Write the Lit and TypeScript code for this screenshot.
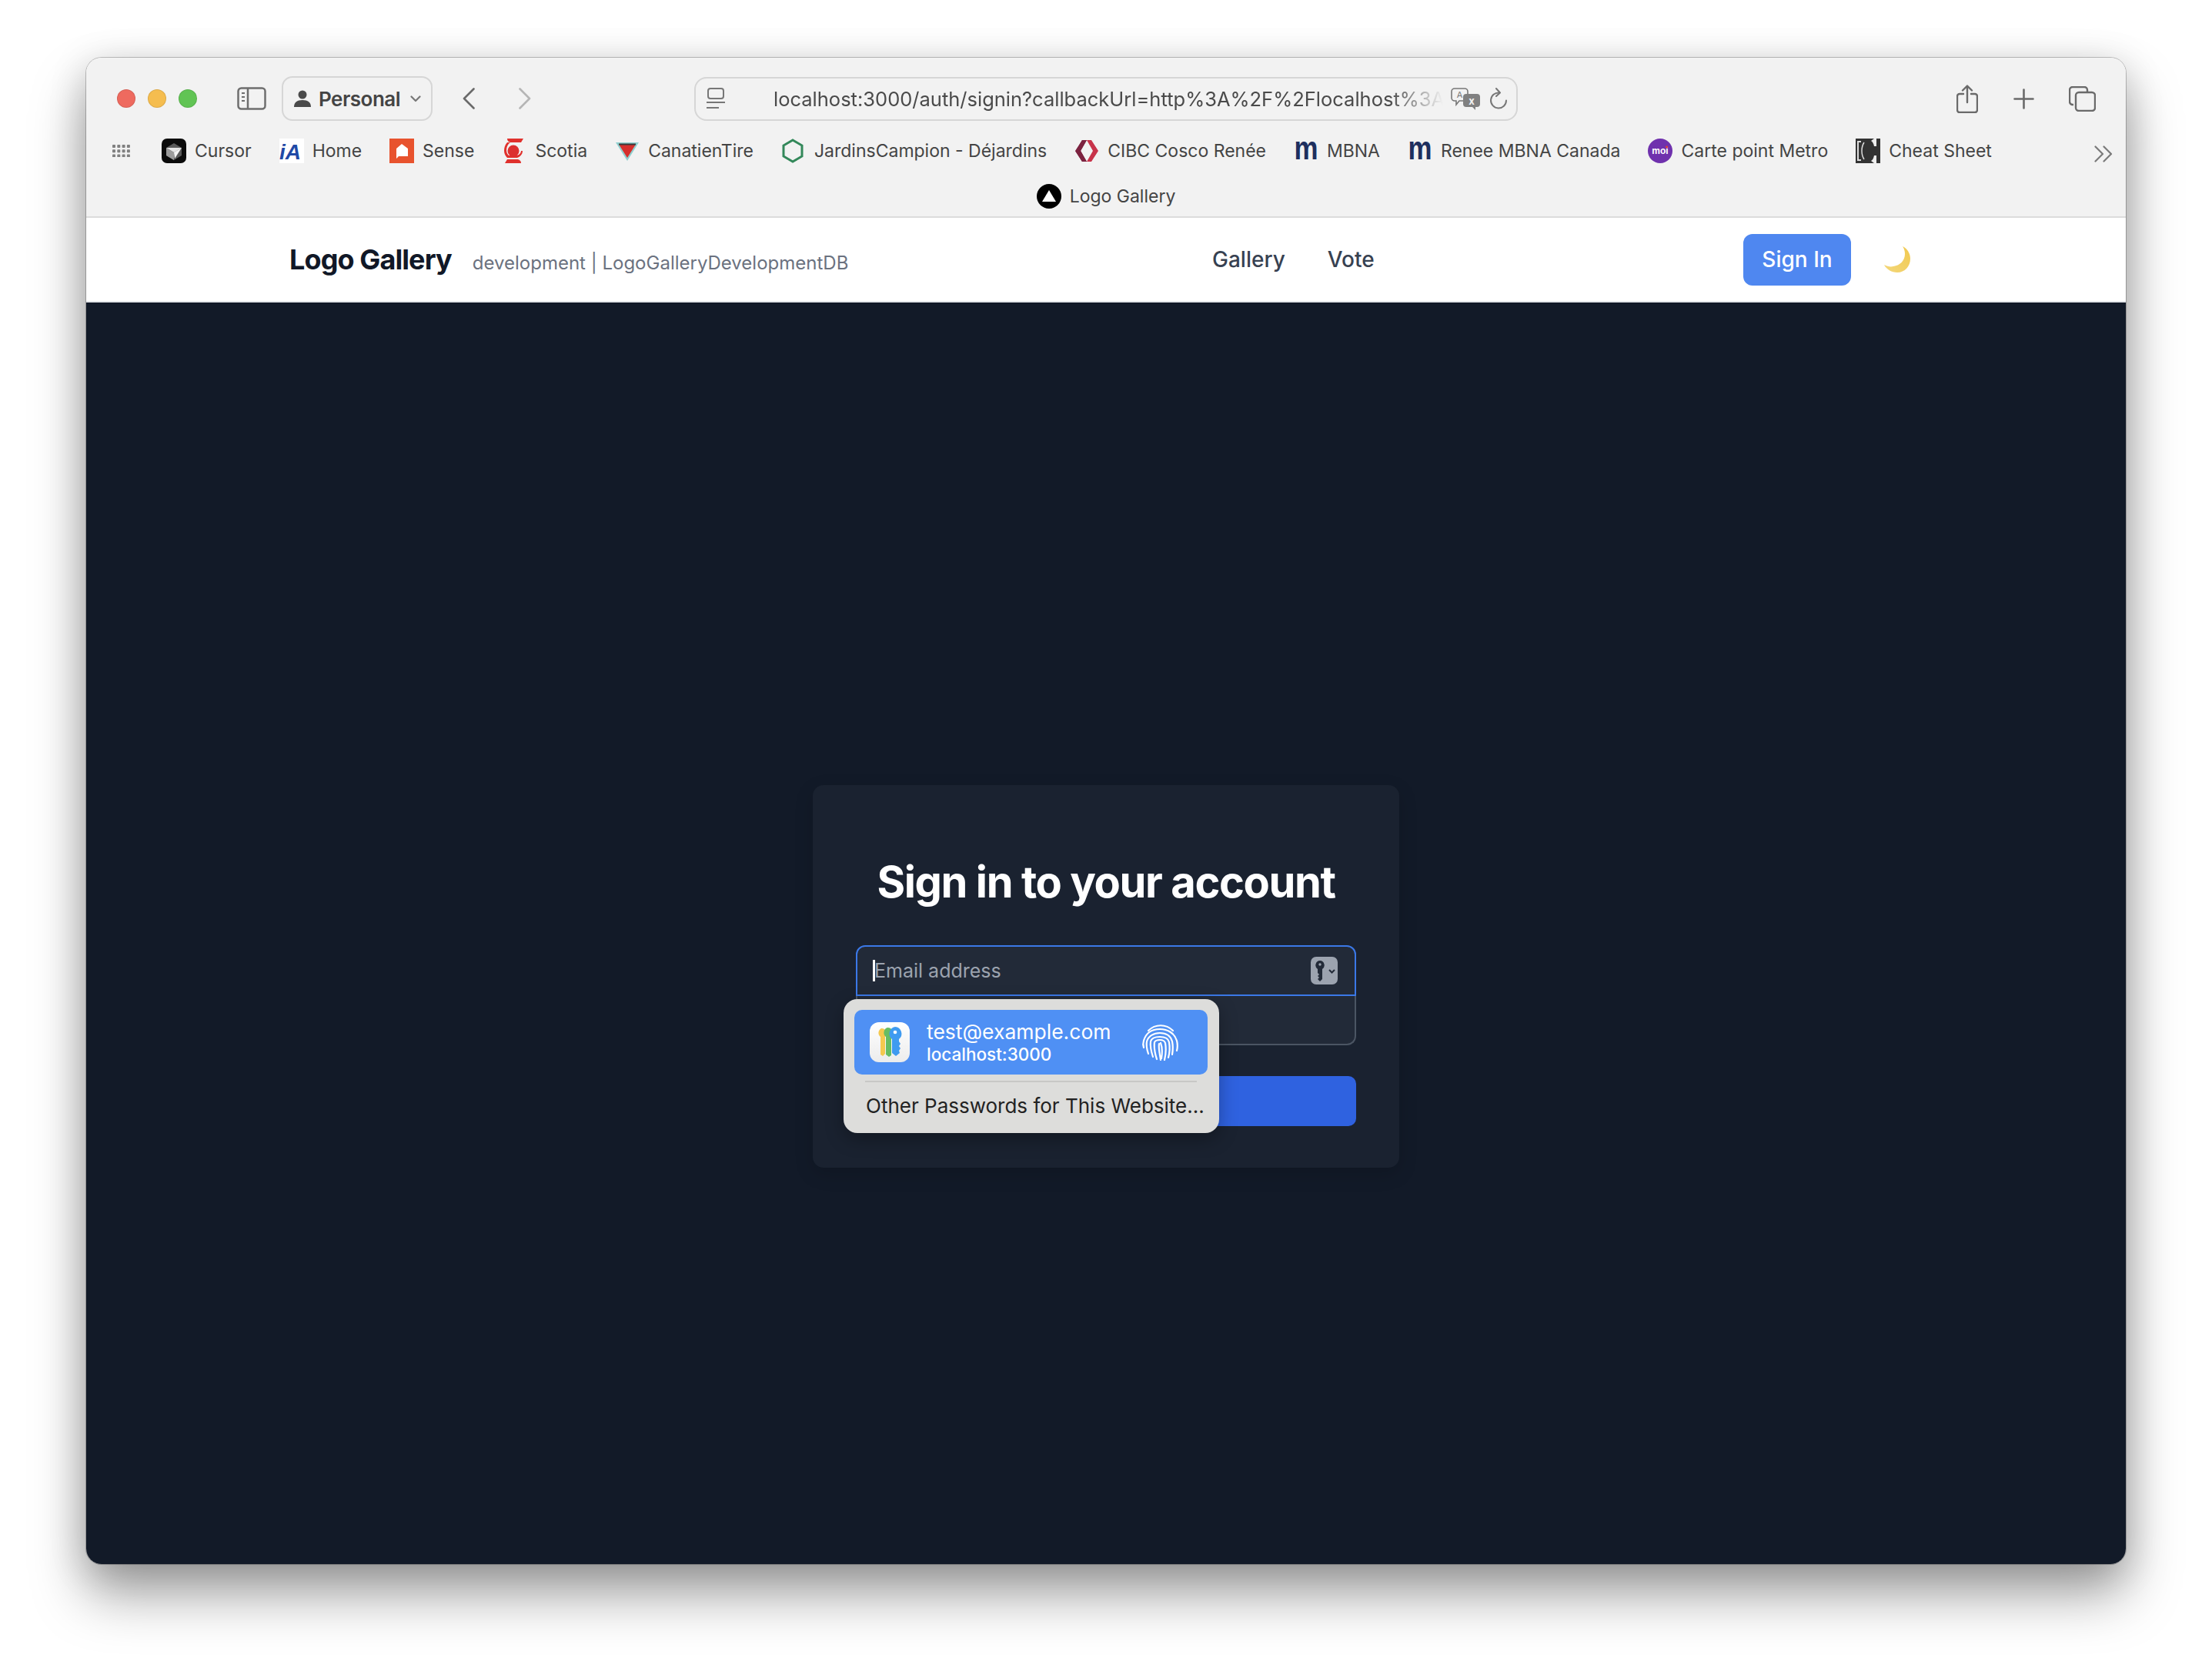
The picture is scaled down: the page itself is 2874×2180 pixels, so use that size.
import { LitElement, html, css, svg } from "lit";
import { customElement } from "lit/decorators.js";

const fav: Record<string, unknown> = {
  cursor: svg`<rect width="32" height="32" rx="7" fill="#0b0b0b"/><path d="M16 6l10 6v10l-10 6-10-6V12z" fill="#5a5a5a"/><path d="M6 12l20 0-10 6z" fill="#e6e6e6"/><path d="M6 12l10 6v10l-10-6z" fill="#9c9c9c"/><path d="M26 12l-10 6 1 8z" fill="#f4f4f4"/>`,
  ia: svg`<rect width="32" height="32" fill="#fff"/><text x="0" y="27" font-family="Liberation Sans" font-weight="700" font-style="italic" font-size="28" fill="#1f49a6">iA</text>`,
  sense: svg`<rect width="32" height="32" fill="#e8532e"/><path d="M16 7l8 6v10H12l-3 3v-13z" fill="#fff"/>`,
  scotia: svg`<path d="M7 0h21l-3 5H13C9 5 7 3 7 0zM4 32l3-5h12c4 0 6 2 6 5z" fill="#e0312d"/><path d="M7 5c-3 3-4 7-4 11 0 4 2 7 4 9h13c3-1 7-4 7-9h-2c0 3-3 6-7 6H9c-2-2-3-4-3-7 0-4 2-8 5-10z" fill="#e0312d"/><circle cx="15" cy="16" r="7.5" fill="#dc3030"/>`,
  tire: svg`<path d="M1 5h30L16 29z" fill="#8fd0cf"/><path d="M5 7.5h22L16 25z" fill="#d62f2c"/><path d="M5 7.5h22" stroke="#3a3a3a" stroke-width="2"/>`,
  hex: svg`<path d="M15 2l12 7v14l-12 7-12-7V9z" fill="none" stroke="#33885a" stroke-width="3"/>`,
  cibc: svg`<path d="M10 2h6l-8 14 8 14h-6L1 16z" fill="#7c2340"/><path d="M16 2h6l9 14-9 14h-6l8-14z" fill="#c8334a"/><path d="M10 2h6l-8 14H2zM8 16l8 14h-6L1 16z" fill="#7c2340"/>`,
  m: svg`<text x="16" y="27" text-anchor="middle" font-family="Liberation Sans" font-weight="700" font-size="42" textLength="31" lengthAdjust="spacingAndGlyphs" fill="#1e2f5e">m</text>`,
  moi: svg`<circle cx="16" cy="16" r="16" fill="#6f31ad"/><text x="16" y="20" text-anchor="middle" font-family="Liberation Sans" font-weight="700" font-size="12" fill="#fff">moi</text><circle cx="24.5" cy="11" r="1.4" fill="#e8402c"/>`,
  cheat: svg`<rect width="32" height="32" fill="#333"/><path d="M2 3h5v2H4v22h3v2H2z" fill="#ddd"/><path d="M24 0h3v10h-3c-1-4-2-6-4-7zM24 32h3V22h-3c-1 4-2 6-4 7z" fill="#eee"/><path d="M11 5c-2 3-3 7-3 11s1 8 3 11" stroke="#ddd" stroke-width="1.5" fill="none"/>`,
  triangle: svg`<circle cx="16" cy="16" r="16" fill="#000"/><path d="M16 8l9 15H7z" fill="#fff"/>`,
};

const row2 = [
  ["cursor", "Cursor"], ["ia", "Home"], ["sense", "Sense"], ["scotia", "Scotia"], ["tire", "CanatienTire"],
  ["hex", "JardinsCampion - Déjardins"], ["cibc", "CIBC Cosco Renée"], ["m", "MBNA"], ["m", "Renee MBNA Canada"],
  ["moi", "Carte point Metro"], ["cheat", "Cheat Sheet"],
];

@customElement("app-root")
export class AppRoot extends LitElement {
  static styles = css`
    :host { display: block; background: #fff; font-family: Inter, "Liberation Sans", sans-serif; padding: 75px 112px 148px; }
    * { box-sizing: border-box; }
    svg { display: block; flex: none; }
    .win { width: 2650px; height: 1957px; border-radius: 20px; overflow: hidden; display: flex; flex-direction: column; }
    .shadow { border-radius: 20px; box-shadow: 0 0 0 1px rgba(0,0,0,.22), 0 40px 70px rgba(0,0,0,.36), 0 8px 50px rgba(0,0,0,.16); }
    .chrome { height: 208px; background: #f2f2f2; border-bottom: 2px solid #dcdcdc; flex: none; }
    .row1 { display: flex; align-items: center; height: 58px; margin-top: 24px; padding-left: 40px; }
    .dot { width: 24px; height: 24px; border-radius: 50%; margin-right: 16px; border: 1px solid rgba(0,0,0,.1); }
    .red { background: #ee6a5f; } .yel { background: #f5bd4f; } .grn { background: #61c454; margin-right: 0; }
    .side { margin-left: 52px; }
    .profile { margin-left: 20px; width: 196px; height: 58px; border: 2px solid #d6d6d6; border-radius: 14px; display: flex; align-items: center; padding-left: 14px; color: #444; font-size: 26px; font-weight: 600; letter-spacing: -.5px; }
    .profile span { margin-left: 10px; }
    .chev { margin-left: 13px; }
    .back { margin-left: 39px; } .fwd { margin-left: 57px; }
    .url { margin-left: 212px; width: 1070px; height: 57px; border: 2px solid #d6d6d6; border-radius: 16px; display: flex; align-items: center; padding-left: 14px; }
    .urltxt { margin-left: 63px; width: 870px; white-space: nowrap; overflow: hidden; font-size: 25.5px; color: #4a4a4a; flex: none; -webkit-mask-image: linear-gradient(90deg, #000 92%, transparent 100%); mask-image: linear-gradient(90deg, #000 92%, transparent 100%); }
    .tr { margin-left: 10px; } .rl { margin-left: 12px; }
    .share { margin-left: 570px; } .plus { margin-left: 46px; } .tabs { margin-left: 45px; }
    .row2 { display: flex; align-items: center; height: 32px; margin-top: 23px; padding-left: 34px; }
    .apps { margin-right: 41px; }
    .bm { display: flex; align-items: center; gap: 11px; margin-right: 36px; font-size: 23px; color: #444; white-space: nowrap; }
    .more { position: absolute; left: 2721px; top: 189px; }
    .row3 { display: flex; justify-content: center; margin-top: 27px; }
    .row3 .bm { margin-right: 0; }
    .nav { height: 110px; flex: none; background: #fff; border-bottom: 2px solid #e5e7eb; display: flex; align-items: center; padding-left: 264px; }
    .brand { width: 1199px; display: flex; align-items: baseline; flex: none; }
    .logo { font-size: 36px; font-weight: 700; color: #111827; letter-spacing: -.9px; }
    .env { margin-left: 27px; font-size: 24px; color: #6b7280; }
    .links { width: 690px; flex: none; display: flex; gap: 55px; font-size: 28px; font-weight: 500; color: #374151; }
    .signin { width: 140px; height: 67px; background: #4f87f0; color: #fff; border: 0; border-radius: 12px; font: 500 28px Inter, sans-serif; display: flex; align-items: center; justify-content: center; }
    .moon { margin-left: 43px; }
    main { flex: 1; background: #121a28; padding-top: 627px; }
    .card { width: 762px; margin: 0 auto; background: #1a2230; border-radius: 14px; padding: 90px 56px 54px; box-shadow: 0 8px 24px rgba(0,0,0,.15); }
    h1 { margin: 0 0 46px; height: 72px; line-height: 72px; text-align: center; font-size: 56px; font-weight: 700; letter-spacing: -1.4px; color: #fff; }
    .form { position: relative; }
    .in { display: flex; align-items: center; background: #222a38; }
    .in1 { height: 66px; border: 2px solid #3b78e7; border-radius: 12px 12px 0 0; padding: 0 22px 0 20px; position: relative; }
    .in2 { height: 64px; border: 2px solid #4b5563; border-top: 0; border-radius: 0 0 12px 12px; }
    .caret { width: 3px; height: 28px; background: #fff; flex: none; }
    .ph { font-size: 25px; color: #9ca3af; margin-left: -1px; }
    .key { margin-left: auto; }
    .submit { margin-top: 40px; height: 65px; background: #2f62e0; border-radius: 10px; }
    .pop { position: absolute; left: -16px; top: 70px; width: 488px; height: 174px; background: #dddddb; border-radius: 18px; padding: 14px 15px 0 14px; box-shadow: 0 8px 24px rgba(0,0,0,.3); }
    .hl { height: 84px; background: #4f90f4; border-radius: 10px; display: flex; align-items: center; padding-left: 20px; color: #fff; }
    .hltxt { margin-left: 22px; }
    .em { font-size: 26.5px; line-height: 32px; }
    .host { font-size: 22.5px; line-height: 28px; font-weight: 500; }
    .fp { margin-left: auto; margin-right: 37px; }
    .sep { height: 2px; background: #c8c8c6; margin: 8px 14px 0; }
    .oth { margin: 15px 0 0 15px; font-size: 26px; line-height: 32px; color: #222; white-space: nowrap; }
  `;

  render() {
    return html`
      <div class="shadow"><div class="win">
        <div class="chrome">
          <div class="row1">
            <i class="dot red"></i><i class="dot yel"></i><i class="dot grn"></i>
            <svg class="side" width="38" height="30" viewBox="0 0 38 30" fill="none" stroke="#6e6e6e" stroke-width="2.5"><rect x="1.5" y="1.5" width="35" height="27" rx="4"/><path d="M14 2v26"/><path d="M6 8h4M6 13h4M6 18h4" stroke-width="2"/></svg>
            <div class="profile">
              <svg width="22" height="22" viewBox="0 0 22 22" fill="#4a4a4a"><circle cx="11" cy="6" r="5.5"/><path d="M0 22c0-6 4-9 11-9s11 3 11 9z"/></svg>
              <span>Personal</span>
              <svg class="chev" width="14" height="9" viewBox="0 0 14 9" fill="none" stroke="#777" stroke-width="2.2" stroke-linecap="round" stroke-linejoin="round"><path d="M1.5 1.5L7 7l5.5-5.5"/></svg>
            </div>
            <svg class="back" width="16" height="28" viewBox="0 0 16 28" fill="none" stroke="#6a6a6a" stroke-width="2.6" stroke-linecap="round" stroke-linejoin="round"><path d="M14.5 1.5L2 14l12.5 12.5"/></svg>
            <svg class="fwd" width="16" height="28" viewBox="0 0 16 28" fill="none" stroke="#b5b5b5" stroke-width="2.6" stroke-linecap="round" stroke-linejoin="round"><path d="M1.5 1.5L14 14 1.5 26.5"/></svg>
            <div class="url">
              <svg width="24" height="28" viewBox="0 0 24 28" fill="none" stroke="#777" stroke-width="2"><rect x="2" y="1" width="20" height="13" rx="3"/><path d="M0 19h24M0 26h16"/></svg>
              <div class="urltxt">localhost:3000/auth/signin?callbackUrl=http%3A%2F%2Flocalhost%3A3000</div>
              <svg class="tr" width="38" height="29" viewBox="0 0 38 29"><path d="M5 1h13a4 4 0 0 1 4 4v8a4 4 0 0 1-4 4h-7l-4 5v-5H5a4 4 0 0 1-4-4V5a4 4 0 0 1 4-4z" fill="none" stroke="#777" stroke-width="1.6"/><text x="11.5" y="13" text-anchor="middle" font-family="Inter" font-size="11" fill="#777">A</text><path d="M20 8h14a4 4 0 0 1 4 4v9a4 4 0 0 1-4 4h-2v4l-4-4h-8a4 4 0 0 1-4-4v-9a4 4 0 0 1 4-4z" fill="#808080"/><text x="27" y="22" text-anchor="middle" font-family="Inter" font-weight="700" font-size="13" fill="#f2f2f2">x</text></svg>
              <svg class="rl" width="24" height="28" viewBox="0 0 24 28" fill="none" stroke="#777" stroke-width="2" stroke-linecap="round" stroke-linejoin="round"><path d="M13 6.5A10 10 0 1 0 22 16.500"/><path d="M9 1l5 5.500-5 4.500"/></svg>
            </div>
            <svg class="share" width="28" height="37" viewBox="0 0 28 37" fill="none" stroke="#6a6a6a" stroke-width="2.4" stroke-linecap="round" stroke-linejoin="round"><path d="M9 12H4a3 3 0 0 0-3 3v18a3 3 0 0 0 3 3h20a3 3 0 0 0 3-3V15a3 3 0 0 0-3-3h-5"/><path d="M14 23V2M8 7.500L14 1.500l6 6"/></svg>
            <svg class="plus" width="27" height="27" viewBox="0 0 27 27" stroke="#6a6a6a" stroke-width="2.6" stroke-linecap="round"><path d="M13.500 1.500v24M1.500 13.500h24"/></svg>
            <svg class="tabs" width="35" height="33" viewBox="0 0 35 33" fill="none" stroke="#6a6a6a" stroke-width="2.400"><path d="M6 24H5a4 4 0 0 1-4-4V5a4 4 0 0 1 4-4h15a4 4 0 0 1 4 4v2"/><rect x="9" y="8" width="25" height="24" rx="4"/></svg>
          </div>
          <div class="row2">
            <svg class="apps" width="23" height="16" viewBox="0 0 23 16" fill="#808080">${[0, 1, 2].flatMap((r) => [0, 1, 2, 3].map((c) => svg`<rect x="${c * 6.300}" y="${r * 6.300}" width="4" height="4" rx=".8"/>`))}</svg>
            ${row2.map(([i, t]) => html`<div class="bm"><svg width="32" height="32" viewBox="0 0 32 32">${fav[i]}</svg><span>${t}</span></div>`)}
          </div>
          <div class="row3"><div class="bm"><svg width="32" height="32" viewBox="0 0 32 32">${fav.triangle}</svg><span>Logo Gallery</span></div></div>
        </div>
        <div class="nav">
          <div class="brand"><span class="logo">Logo Gallery</span><span class="env">development | LogoGalleryDevelopmentDB</span></div>
          <div class="links"><span>Gallery</span><span>Vote</span></div>
          <button class="signin">Sign In</button>
          <svg class="moon" width="34" height="34" viewBox="0 0 34 34"><defs><linearGradient id="mg" x1="0" y1="1" x2="1" y2="0"><stop offset="0" stop-color="#f3d77a"/><stop offset="1" stop-color="#f1c94f"/></linearGradient></defs><path d="M24 0c6 3 10 9 10 16 0 10-7 18-17 18C10 34 3 30 0 24c4 2 8 3 12 2 9-1 15-8 15-16 0-4-1-7-3-10z" fill="url(#mg)"/></svg>
        </div>
        <main>
          <div class="card">
            <h1>Sign in to your account</h1>
            <div class="form">
              <div class="in in1"><i class="caret"></i><span class="ph">Email address</span>
                <svg class="key" width="35" height="36" viewBox="0 0 35 36"><rect width="35" height="36" rx="7" fill="#9ca3af"/><path d="M12 5a6 6 0 0 1 3 11v13l-3 3-3-3 2-2-2-2 2-2-2-2v-5A6 6 0 0 1 12 5z" fill="#222a38"/><circle cx="12" cy="10" r="1.700" fill="#9ca3af"/><path d="M24 17l3.500 3.500L31 17" fill="none" stroke="#222a38" stroke-width="2"/></svg>
              </div>
              <div class="in in2"></div>
              <div class="submit"></div>
              <div class="pop">
                <div class="hl">
                  <svg width="52" height="52" viewBox="0 0 52 52"><defs><linearGradient id="ap" x1="0" y1="0" x2="0" y2="1"><stop offset="0" stop-color="#fff"/><stop offset="1" stop-color="#ececec"/></linearGradient></defs><rect width="52" height="52" rx="12" fill="url(#ap)"/><path d="M15 8a6.500 6.500 0 0 1 5 11v22l-3 3-3-2V19a6.500 6.500 0 0 1 1-11z" fill="#f4c94f"/><path d="M23 7a7 7 0 0 1 5 12v24l-3 2-4-3V19a7 7 0 0 1 2-12z" fill="#66bd63"/><path d="M33 6a9 9 0 0 1 5 16v3l2 3-2 3 2 3-2 3 1 3-5 4-5-4V22a9 9 0 0 1 4-16z" fill="#3f9bf0"/><circle cx="33" cy="13" r="2.300" fill="#fff"/></svg>
                  <div class="hltxt"><div class="em">test@example.com</div><div class="host">localhost:3000</div></div>
                  <svg class="fp" width="49" height="47" viewBox="0 0 49 47" fill="none" stroke="#fff" stroke-width="2.200" stroke-linecap="round"><path d="M9 8C18-1 32-1 41 8"/><path d="M3 21C6 11 14 6 24 6s19 5 22 15c1 4 1 9 0 13"/><path d="M3 30c-1-3-1-6 0-9"/><path d="M9 38c-2-6-3-11-2-16C9 15 16 11 24 11s14 4 16 11c1 5 1 11 0 17"/><path d="M15 42c-2-6-4-13-3-20 1-4 6-6 12-6s11 2 12 7c1 6 1 13-1 20"/><path d="M20 45c-2-6-4-14-3-22 1-2 4-3 7-3s6 1 7 4c1 6 1 14-1 22"/><path d="M25 46c-1-7-3-15-2-21M25 24c2 5 2 14 1 20"/></svg>
                </div>
                <div class="sep"></div>
                <div class="oth">Other Passwords for This Website...</div>
              </div>
            </div>
          </div>
        </main>
      </div></div>
      <svg class="more" width="24" height="22" viewBox="0 0 24 22" fill="none" stroke="#7a7a7a" stroke-width="2.200" stroke-linecap="round" stroke-linejoin="round"><path d="M1.500 1.500L11 11l-9.500 9.500M12.500 1.500L22 11l-9.500 9.500"/></svg>
    `;
  }
}
